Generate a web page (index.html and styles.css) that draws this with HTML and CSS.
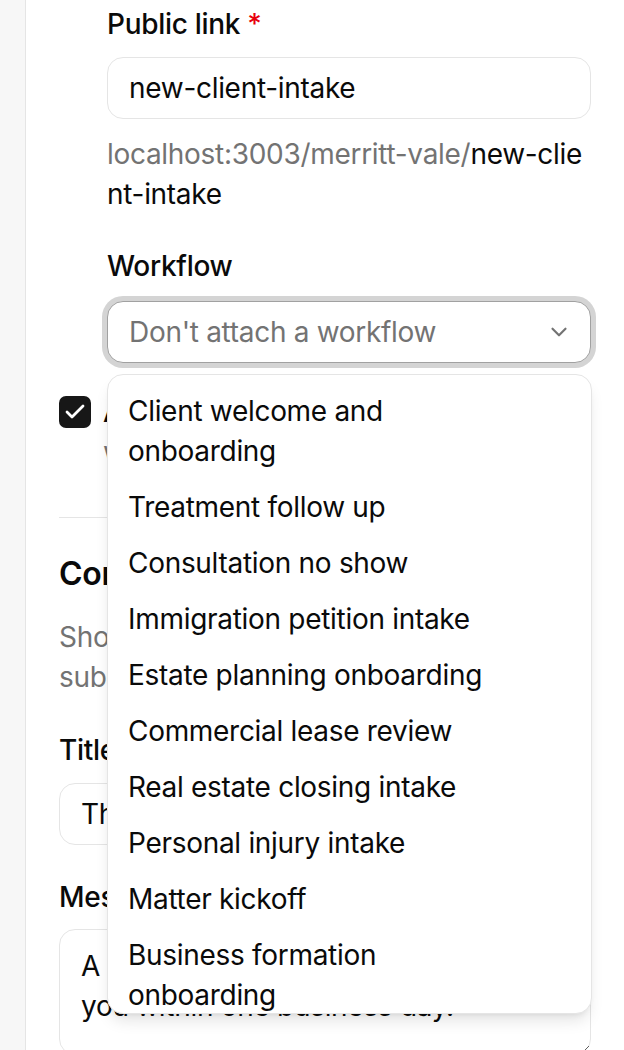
FILE: index.html
```html
<!DOCTYPE html>
<html lang="en">
<head>
<meta charset="utf-8">
<title>Intake form settings</title>
<link rel="stylesheet" href="styles.css">
</head>
<body>
<div class="panel">
  <div class="subfields">
    <div class="field">
      <label class="label" for="slug">Public link <span class="req">*</span></label>
      <input id="slug" class="input" type="text" value="new-client-intake">
      <p class="helper"><span class="muted">localhost:3003/merritt-vale/</span>new-client-intake</p>
    </div>
    <div class="field field-gap">
      <label class="label">Workflow</label>
      <div class="select-wrap">
        <button class="select" type="button">
          <span class="placeholder">Don't attach a workflow</span>
          <svg class="chevron" width="26" height="26" viewBox="0 0 24 24" fill="none" stroke="currentColor" stroke-width="2" stroke-linecap="round" stroke-linejoin="round"><path d="m6 9 6 6 6-6"/></svg>
        </button>
        <ul class="menu">
          <li class="option">Client welcome and onboarding</li>
          <li class="option">Treatment follow up</li>
          <li class="option">Consultation no show</li>
          <li class="option">Immigration petition intake</li>
          <li class="option">Estate planning onboarding</li>
          <li class="option">Commercial lease review</li>
          <li class="option">Real estate closing intake</li>
          <li class="option">Personal injury intake</li>
          <li class="option">Matter kickoff</li>
          <li class="option">Business formation onboarding</li>
        </ul>
      </div>
    </div>
  </div>

  <div class="check-row">
    <span class="checkbox">
      <svg width="24" height="24" viewBox="0 0 24 24" fill="none" stroke="#fff" stroke-width="2.8" stroke-linecap="round" stroke-linejoin="round"><path d="M20 6 9 17l-5-5"/></svg>
    </span>
    <div class="check-text">
      <div class="check-title">Auto-create a client record</div>
      <div class="check-desc">when this form is submitted.</div>
    </div>
  </div>

  <hr class="divider">

  <h2 class="heading">Confirmation</h2>
  <p class="desc">Shown to the client right after they submit the form.</p>

  <div class="field title-field">
    <label class="label">Title</label>
    <input class="input" type="text" value="Thank you for reaching out">
  </div>

  <div class="field msg-field">
    <label class="label">Message</label>
    <textarea class="textarea">A member of our team will call
you within one business day.</textarea>
  </div>
</div>
</body>
</html>
```

FILE: styles.css
```css
* { box-sizing: border-box; }

html, body {
  margin: 0;
  padding: 0;
  height: 100%;
  overflow: hidden;
}

body {
  background: #f7f7f7;
  font-family: Inter, "Liberation Sans", sans-serif;
  color: #0a0a0a;
  font-size: 28px;
  line-height: 40px;
  letter-spacing: -0.3px;
}

.panel {
  margin-left: 25px;
  min-height: 100%;
  background: #fff;
  border-left: 1px solid #e5e5e5;
  padding: 4px 33px 0 33px;
}

.subfields {
  padding-left: 48px;
}

.field {
  display: flex;
  flex-direction: column;
}

.label {
  font-weight: 500;
  font-size: 28px;
  line-height: 40px;
}

.req {
  color: #e7000b;
}

.input {
  margin-top: 13px;
  height: 62px;
  border: 1px solid #e5e5e5;
  border-radius: 16px;
  padding: 0 21px;
  font: inherit;
  letter-spacing: inherit;
  color: #0a0a0a;
  background: #fff;
  outline: none;
}

.helper {
  margin: 15px 0 0;
  word-break: break-all;
}

.muted {
  color: #737373;
}

.field-gap {
  margin-top: 32px;
}

.select-wrap {
  position: relative;
  margin-top: 15px;
}

.select {
  width: 100%;
  height: 62px;
  display: flex;
  align-items: center;
  justify-content: space-between;
  padding: 0 18px 0 21px;
  border: 1px solid #a1a1a1;
  border-radius: 16px;
  background: #fff;
  box-shadow: 0 0 0 5px #d4d4d4;
  font: inherit;
  letter-spacing: inherit;
  text-align: left;
}

.placeholder {
  color: #737373;
}

.chevron {
  color: #737373;
  flex: none;
}

.menu {
  position: absolute;
  top: calc(100% + 11px);
  left: 0;
  right: -1px;
  height: 640px;
  margin: 0;
  padding: 8px 0;
  list-style: none;
  background: #fff;
  border: 1px solid #e5e5e5;
  border-radius: 16px;
  box-shadow: 0 10px 15px -3px rgba(0, 0, 0, 0.1), 0 4px 6px -4px rgba(0, 0, 0, 0.1);
  overflow: hidden;
  z-index: 10;
}

.option {
  padding: 8px 72px 8px 20px;
  color: #0a0a0a;
}

.check-row {
  display: flex;
  gap: 12px;
  margin-top: 29px;
}

.checkbox {
  flex: none;
  width: 32px;
  height: 32px;
  margin-top: 4px;
  border-radius: 7px;
  background: #171717;
  display: flex;
  align-items: center;
  justify-content: center;
}

.check-title {
  font-weight: 500;
}

.check-desc {
  color: #737373;
}

.divider {
  margin: 45px 0 0;
  border: 0;
  border-top: 1px solid #e5e5e5;
}

.heading {
  margin: 36px 0 0;
  font-size: 32px;
  line-height: 40px;
  font-weight: 600;
}

.desc {
  margin: 23px 0 0;
  color: #737373;
}

.title-field {
  margin-top: 33px;
}

.msg-field {
  margin-top: 32px;
}

.textarea {
  margin-top: 12px;
  height: 126px;
  border: 1px solid #e5e5e5;
  border-radius: 16px;
  padding: 16px 21px;
  font: inherit;
  letter-spacing: inherit;
  color: #0a0a0a;
  resize: vertical;
  outline: none;
}
```
